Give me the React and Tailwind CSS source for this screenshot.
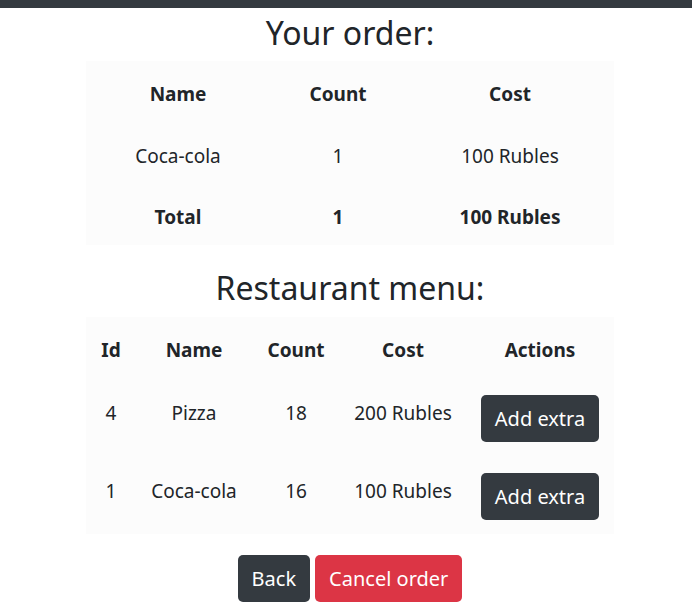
import React from "react";

const order = [{ name: "Coca-cola", count: 1, cost: "100 Rubles" }];

const menu = [
  { id: 4, name: "Pizza", count: 18, cost: "200 Rubles" },
  { id: 1, name: "Coca-cola", count: 16, cost: "100 Rubles" },
];

export default function App() {
  return (
    <div className="min-h-screen bg-white text-[#212529] font-['Noto_Sans',sans-serif]">
      {/* top bar */}
      <div className="h-2 bg-[#343a40]" />

      <div className="flex flex-col items-center pl-2">
        <h2 className="mt-[6px] text-[32px] leading-[38px]">Your order:</h2>

        <table className="mt-[9px] w-[528px] table-fixed bg-[#fcfcfc] text-center text-[19px] leading-[27px]">
          <thead>
            <tr className="h-[61px]">
              <th className="w-[184px] pt-[6px] font-bold">Name</th>
              <th className="w-[136px] pt-[6px] font-bold">Count</th>
              <th className="pt-[6px] font-bold">Cost</th>
            </tr>
          </thead>
          <tbody>
            {order.map((item, i) => (
              <tr key={i} className="h-[62px]">
                <td className="pt-[6px]">{item.name}</td>
                <td className="pt-[6px]">{item.count}</td>
                <td className="pt-[6px]">{item.cost}</td>
              </tr>
            ))}
            <tr className="h-[61px] font-bold">
              <td className="pt-[6px]">Total</td>
              <td className="pt-[6px]">1</td>
              <td className="pt-[6px]">100 Rubles</td>
            </tr>
          </tbody>
        </table>

        <h2 className="mt-[24px] text-[32px] leading-[38px]">Restaurant menu:</h2>

        <table className="mt-[10px] w-[528px] table-fixed bg-[#fcfcfc] text-center text-[19px] leading-[27px]">
          <thead>
            <tr className="h-[61px]">
              <th className="w-[50px] pt-[6px] font-bold">Id</th>
              <th className="w-[116px] pt-[6px] font-bold">Name</th>
              <th className="w-[88px] pt-[6px] font-bold">Count</th>
              <th className="w-[126px] pt-[6px] font-bold">Cost</th>
              <th className="pt-[6px] font-bold">Actions</th>
            </tr>
          </thead>
          <tbody>
            {menu.map((item) => (
              <tr key={item.id} className="h-[78px]">
                <td className="pt-[22px] align-top">{item.id}</td>
                <td className="pt-[22px] align-top">{item.name}</td>
                <td className="pt-[22px] align-top">{item.count}</td>
                <td className="pt-[22px] align-top">{item.cost}</td>
                <td className="pt-[17px] align-top">
                  <button className="h-[47px] w-[118px] rounded-[5px] bg-[#343a40] text-[20px] text-white">
                    Add extra
                  </button>
                </td>
              </tr>
            ))}
          </tbody>
        </table>

        <div className="mt-[21px] flex gap-[5px]">
          <button className="h-[47px] rounded-[5px] bg-[#343a40] px-[14px] text-[20px] text-white">Back</button>
          <button className="h-[47px] rounded-[5px] bg-[#dc3545] px-[14px] text-[20px] text-white">Cancel order</button>
        </div>
      </div>
    </div>
  );
}
